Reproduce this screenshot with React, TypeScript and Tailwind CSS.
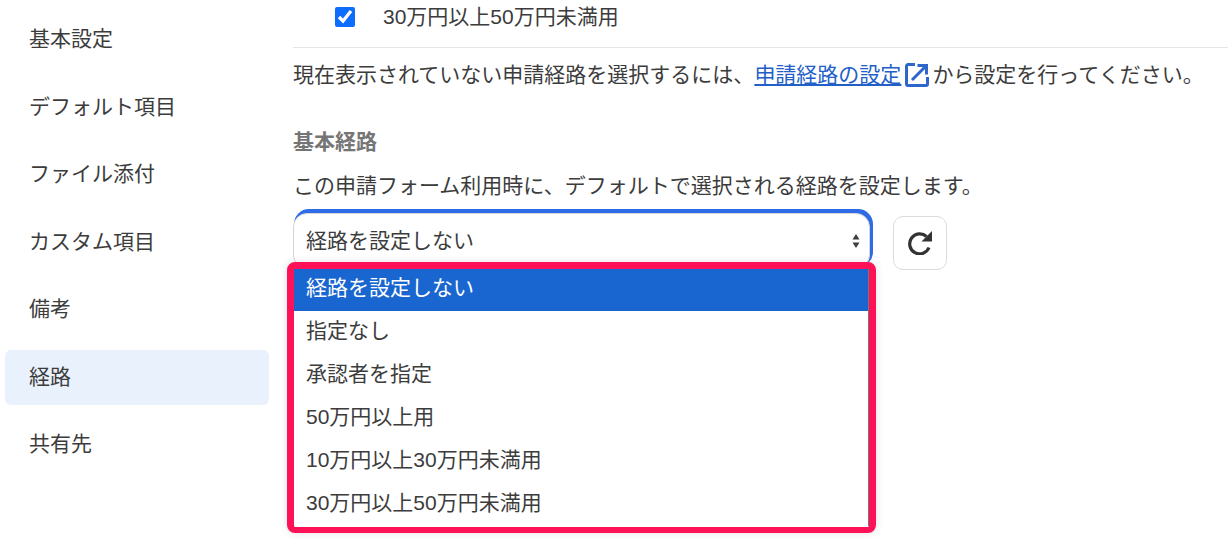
import React from "react";

const NAV_ITEMS = ["基本設定", "デフォルト項目", "ファイル添付", "カスタム項目", "備考", "経路", "共有先"];
const OPTIONS = ["経路を設定しない", "指定なし", "承認者を指定", "50万円以上用", "10万円以上30万円未満用", "30万円以上50万円未満用"];

export default function App() {
  return (
    <div className="flex h-[545px] w-[1228px] overflow-hidden bg-white font-['Liberation_Sans','Noto_Sans_CJK_JP',sans-serif] text-[21px] leading-[30px] text-[#3c3c3c]">
      <nav className="flex w-[293px] shrink-0 flex-col gap-[12.5px] pl-[5px] pr-[24px] pt-[12px]">
        {NAV_ITEMS.map((item) => (
          <div
            key={item}
            className={`flex h-[55px] items-center rounded-[6px] pb-[1px] pl-[24px] ${item === "経路" ? "bg-[#e9f1fd]" : ""}`}
          >
            {item}
          </div>
        ))}
      </nav>

      <main className="min-w-0 flex-1">
        <div className="flex h-[48px] items-start border-b border-[#e5e5e5] pl-[42px] pt-[2px]">
          <input type="checkbox" defaultChecked readOnly className="mt-[5px] h-[20px] w-[20px] accent-[#0d6efd]" />
          <span className="ml-[28px]">30万円以上50万円未満用</span>
        </div>

        <p className="mt-[12px] flex items-center whitespace-nowrap">
          現在表示されていない申請経路を選択するには、
          <a href="#" className="text-[#2260c8] underline underline-offset-2">申請経路の設定</a>
          <svg className="ml-[4px] mr-[3px] h-[24px] w-[24px] text-[#2f66cc]" viewBox="0 0 24 24" fill="none" stroke="currentColor" strokeWidth="3">
            <path d="M10 1.5H3a1.5 1.5 0 0 0-1.5 1.5v18A1.5 1.5 0 0 0 3 22.5h18a1.5 1.5 0 0 0 1.5-1.5v-7" />
            <path d="M7 17 21 3" />
            <path d="M12.5 2.5h9v9" />
          </svg>
          から設定を行ってください。
        </p>

        <h3 className="mt-[37px] text-[21px] font-bold text-[#757575]">基本経路</h3>
        <p className="mt-[14px]">この申請フォーム利用時に、デフォルトで選択される経路を設定します。</p>

        <div className="relative mt-[12px] flex items-start">
          <div className="flex h-[56px] w-[577px] items-center justify-between rounded-[14px] border border-[#d5d5d5] bg-white pl-[12px] pr-[9px] shadow-[2px_-3px_0_1px_#2e6be6]">
            経路を設定しない
            <svg className="h-[16px] w-[8px] text-[#3c3c3c]" viewBox="0 0 8 16" fill="currentColor">
              <path d="M4 1 7.5 6.5h-7zM4 15 .5 9.5h7z" />
            </svg>
          </div>
          <button className="ml-[23px] mt-[3px] flex h-[54px] w-[54px] items-center justify-center rounded-[10px] border border-[#dcdcdc] bg-white text-[#333]">
            <svg className="h-[24px] w-[24px]" viewBox="0 0 24 24" fill="none" stroke="currentColor" strokeWidth="3.2">
              <path d="M18.5 5.5A10 10 0 1 0 21 16.5" />
              <path d="M24 0v10.5H13.5z" fill="currentColor" stroke="none" />
            </svg>
          </button>

          <ul className="absolute left-[-6px] top-[49px] w-[589px] rounded-[8px] border-x-[7px] border-t-[7px] border-b-[6px] border-[#ff1158] bg-white pb-[1px] shadow-[0_0_8px_rgba(0,0,0,0.12)]">
            {OPTIONS.map((option, i) => (
              <li
                key={option}
                className={`flex items-center border-r border-[#767676] pl-[12px] ${i === 0 ? "h-[42px] bg-[#1a66d0] pb-[4px] text-white" : "h-[43px] pb-[4px]"}`}
              >
                {option}
              </li>
            ))}
          </ul>
        </div>
      </main>
    </div>
  );
}
